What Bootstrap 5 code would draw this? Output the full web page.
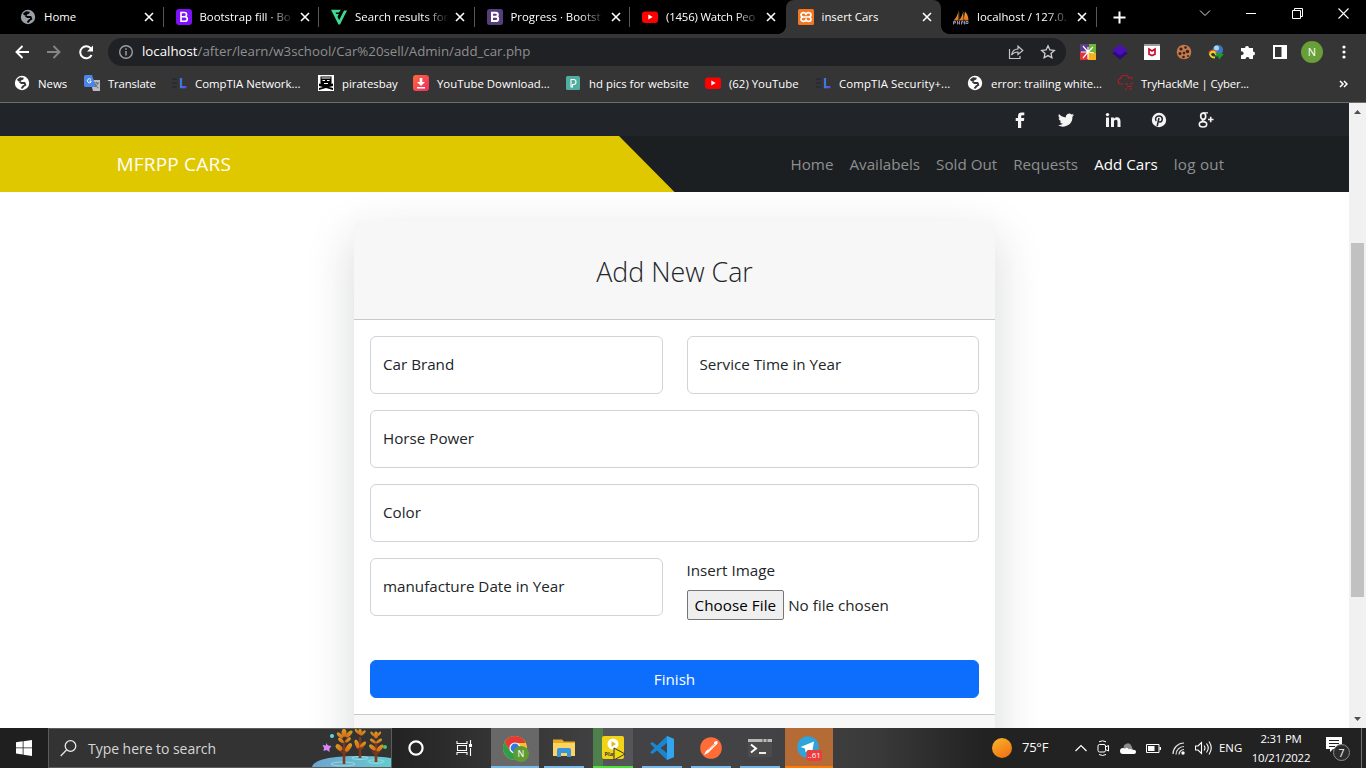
<!DOCTYPE html>
<html lang="en">
<head>
<meta charset="utf-8">
<title>insert Cars</title>
<link rel="stylesheet" href="https://cdn.jsdelivr.net/npm/bootstrap@5.3.0/dist/css/bootstrap.min.css">
<script src="https://cdn.jsdelivr.net/npm/bootstrap@5.3.0/dist/js/bootstrap.bundle.min.js"></script>
<style>
body{font-family:"Open Sans","Noto Sans",sans-serif;font-size:15.2px;width:1366px;height:768px;overflow:hidden}
svg{display:block;flex:none}
.tabstrip{height:34px;background:#000;color:#fff;font-size:11.4px;padding-left:8px}
.tab{width:155.5px;height:34px;padding-left:12px;flex:none;position:relative}
.tab-title{width:94px;margin-left:8px;white-space:nowrap;-webkit-mask-image:linear-gradient(90deg,#000 74%,transparent);mask-image:linear-gradient(90deg,#000 74%,transparent)}
.tab-title.whole{-webkit-mask-image:none;mask-image:none}
.tab .shut{margin-left:6px}
.tab.split{border-right:1px solid #55585b;height:20px}
.tab.current{background:#353535;border-radius:8px 8px 0 0}
.tab.current::before,.tab.current::after{content:"";position:absolute;bottom:0;width:8px;height:8px}
.tab.current::before{left:-8px;background:radial-gradient(circle at 0 0,#000 7.6px,#353535 8px)}
.tab.current::after{right:-8px;background:radial-gradient(circle at 100% 0,#000 7.6px,#353535 8px)}
.winbtn{width:46px}
.toolbar{height:36px;background:#353535;padding-left:6px}
.slot{width:32px;flex:none;display:flex;justify-content:center;align-items:center}
.omnibox{height:28px;width:958px;margin-left:6px;border-radius:14px;background:#202124;color:#9aa0a6;font-size:13.28px;flex:none;padding-left:10px}
.omnibox .url{margin-left:8px;color:#8f8f8f}
.avatar{width:22px;height:22px;border-radius:50%;background:#689f38;color:#fff;font-size:11px}
.marks{height:33px;background:#353535;color:#fff;border-bottom:1px solid #6d6d6d;font-size:11.4px;padding:0 18px 5px 14px;display:grid;grid-template-columns:70px 87px 147px 95px 152px 140px 110px 152px 150px 1fr auto;align-items:center;white-space:nowrap}
.marks>div{display:flex;align-items:center;gap:8px}
.tight{letter-spacing:-.18px}
.viewport{height:625px}
.page{width:1349px;overflow:hidden}
.scroller{width:17px;background:#f1f1f1;padding-top:7px}
.thumb{width:13px;height:354px;background:#c1c1c1;margin-top:129px}
.social{height:33px;background:#212529}
.social .inner{gap:30.5px;padding-right:19px}
.mainnav{height:56px;background:#1c1f21}
.yellow{position:absolute;inset:0 50% 0 0;background:#e0c800;clip-path:polygon(0 0,619px 0,100% 100%,0 100%)}
.navbar-brand{font-size:19px;margin-right:0;letter-spacing:.2px}
.mainnav .nav-link{font-size:15.2px;padding:8px;color:#8d8f90}
.mainnav .nav-link.active{color:#fff}
.addcard{width:641px;margin-top:29px;border:0;height:620px}
.addcard .card-header{height:99px;background:#f7f7f7;border-bottom:1px solid #c9c9c9;padding-top:13px}
.addcard .card-header h3{font-weight:300;font-size:26.8px}
.addcard .card-footer{background:#f7f7f7;border-top:1px solid #c9c9c9}
.addcard .form-control{border-color:#ced4da}
.form-floating>label{color:#212529}
.filebtn{height:30px;border:1px solid #767676;border-radius:2px;background:#efefef;color:#000;padding:0 7px;letter-spacing:.07px}
.btn{font-size:15.2px;height:38px}
.taskbar{height:40px;background:linear-gradient(90deg,#1f1f1f 0,#232323 29%,#343434 36%,#434244 45%,#434244 56%,#3a3a3b 64%,#222 72%,#222);color:#fff}
.searchbox{width:344px;height:40px;background:#333;border:1px solid #5c5c5c;color:#d6d6d6;font-size:14px}
.app{width:48px;height:40px;margin-right:1px;flex:none;position:relative;display:flex;justify-content:center;align-items:center}
.app::after{content:"";position:absolute;left:4px;right:4px;bottom:0;height:2px;background:#76b9ed}
.app.on{background:#686868}.app.on::after,.app.alert-app::after{left:0;right:0}
.app.play{background:linear-gradient(90deg,transparent 4px,#4f7f4b 4px,#4f7f4b 14px,#555557 14px,#555557 44px,transparent 44px)}
.app.play::after{background:#4be33a}
.app.alert-app{background:#b46b35}.app.alert-app::after{background:#ff7a00}
.sun{width:20px;height:20px;border-radius:50%;background:linear-gradient(150deg,#f8b62c,#f06a10)}
.clock{width:80px;font-size:11.4px;line-height:19px;text-align:center;margin-left:-3px;letter-spacing:-.2px}
</style>
</head>
<body class="d-flex flex-column m-0">
<svg width="0" height="0" class="position-absolute">
<defs>
<symbol id="x" viewBox="0 0 10 10"><path d="M1 1l8 8M9 1l-8 8" stroke="#fff" stroke-width="1.6"/></symbol>
<symbol id="globe" viewBox="0 0 16 16"><circle cx="8" cy="8" r="7.2" fill="currentColor"/><path d="M9.800 2.800Q10 5 7.500 5.200L6.300 6.500 4 6.200 3 4.500 6 2.300z" fill="var(--cut,#353535)"/><path d="M5.500 6.800l2 1.200h3l.8 2-2 1.300-1.800 2.200" fill="none" stroke="var(--cut,#353535)" stroke-width="1.900"/></symbol>
<symbol id="yt" viewBox="0 0 16 16"><rect y="2.500" width="16" height="11.500" rx="3" fill="#f00"/><path d="M6.300 5.500v5l4.400-2.500z" fill="#fff"/></symbol>
<symbol id="el" viewBox="0 0 16 16"><path d="M1 4h5M1 8h5M1 12h5" stroke="#2b2b36" stroke-width="1.800"/><path d="M10 3v9.200h5.500" fill="none" stroke="url(#elg)" stroke-width="2.200"/></symbol>
<linearGradient id="elg"><stop offset="0" stop-color="#3a7be0"/><stop offset="1" stop-color="#6a3fd0"/></linearGradient>
<linearGradient id="boat" x2="0" y2="1"><stop offset="0" stop-color="#f9b233"/><stop offset="1" stop-color="#e0701c"/></linearGradient>
</defs>
</svg>

<!-- tabs -->
<div class="tabstrip d-flex align-items-center">
  <div class="tab split d-flex align-items-center"><svg width="16" height="16" style="color:#9aa0a6;--cut:#000"><use href="#globe"/></svg><span class="tab-title whole">Home</span><svg class="shut" width="10" height="10"><use href="#x"/></svg></div>
  <div class="tab split d-flex align-items-center"><svg width="16" height="16"><rect width="16" height="16" rx="3" fill="#7d12f8"/><path d="M5 3.500h3.500a2 2 0 010 4.200H5h4a2.300 2.300 0 010 4.600H5z" fill="none" stroke="#fff" stroke-width="1.600"/></svg><span class="tab-title">Bootstrap fill · Bo</span><svg class="shut" width="10" height="10"><use href="#x"/></svg></div>
  <div class="tab split d-flex align-items-center"><svg width="16" height="16"><path d="M0 .8h9.800L8 3.600H4.500l.8 1.500h2.500L6.500 8l1.700 3L13 1.500h3L9 15.500H7.500z" fill="#3ddc91"/></svg><span class="tab-title">Search results for</span><svg class="shut" width="10" height="10"><use href="#x"/></svg></div>
  <div class="tab split d-flex align-items-center"><svg width="16" height="16"><rect width="16" height="16" rx="2.500" fill="#563d7c"/><path d="M5 3.800h3.800a1.800 1.800 0 010 4H5h4a2.100 2.100 0 010 4.300H5z" fill="none" stroke="#fff" stroke-width="2"/></svg><span class="tab-title">Progress · Bootst</span><svg class="shut" width="10" height="10"><use href="#x"/></svg></div>
  <div class="tab d-flex align-items-center"><svg width="16" height="16"><use href="#yt"/></svg><span class="tab-title tight">(1456) Watch Peo</span><svg class="shut" width="10" height="10"><use href="#x"/></svg></div>
  <div class="tab current d-flex align-items-center"><svg width="16" height="16"><rect width="16" height="16" rx="1.500" fill="#f37623"/><path d="M8 6.300V5.500C8 3 3 3 3 5.500 3 7 4 8 5.500 8h5C12 8 13 7 13 5.500 13 3 8 3 8 5.500M8 9.500v1c0 2.500-5 2.500-5 0C3 9 4 8 5.500 8h5c1.500 0 2.500 1 2.500 2.500 0 2.500-5 2.500-5 0" fill="none" stroke="#fff" stroke-width="1.700"/></svg><span class="tab-title whole">insert Cars</span><svg class="shut" width="10" height="10"><use href="#x"/></svg></div>
  <div class="tab split d-flex align-items-center"><svg width="16" height="16"><path d="M5.500 1Q5 7 .5 11.500h5zM8.500 0q3 6-3 11.500h6zM12 2.500q3.500 4 3.500 9h-5z" fill="url(#boat)"/><path d="M6 3.500v8M10.500 3v8.500" stroke="#5a4630" stroke-width=".8"/><path d="M.5 15.500v-3h2v1.500h-1.500M4.500 12v3.500M4.500 14h2M6.500 12v3.500M8.500 15.500v-3h1.500v2M11.500 12v3.500M13 15v-2.500h2v2h-2" fill="none" stroke="#8d8fb8" stroke-width="1"/></svg><span class="tab-title">localhost / 127.0.</span><svg class="shut" width="10" height="10"><use href="#x"/></svg></div>
  <svg class="ms-3" width="13" height="13"><path d="M6.500.5v12M.5 6.500h12" stroke="#fff" stroke-width="2"/></svg>
  <div class="d-flex align-items-center ms-auto mb-1 pb-1">
    <div class="winbtn"><svg class="mx-auto" width="12" height="8"><path d="M1 1.500l5 5 5-5" fill="none" stroke="#ddd"/></svg></div>
    <div class="winbtn"><svg class="mx-auto" width="10" height="10"><path d="M0 5.500h10" stroke="#fff"/></svg></div>
    <div class="winbtn"><svg class="mx-auto" width="11" height="11"><path d="M.5 2.500h8v8h-8zM2.500 2V.5h8v8H9" fill="none" stroke="#fff"/></svg></div>
    <div class="winbtn"><svg class="mx-auto" width="11" height="11"><path d="M.5.5l10 10M10.500.5l-10 10" stroke="#fff" stroke-width="1.100"/></svg></div>
  </div>
</div>

<!-- toolbar -->
<div class="toolbar d-flex align-items-center">
  <div class="slot"><svg width="14" height="14"><path d="M14 7H1.500M7.500 1l-6 6 6 6" fill="none" stroke="#fff" stroke-width="1.900"/></svg></div>
  <div class="slot"><svg width="14" height="14"><path d="M0 7h12.500M6.500 1l6 6-6 6" fill="none" stroke="#858585" stroke-width="1.900"/></svg></div>
  <div class="slot"><svg width="15" height="15"><path d="M12.600 10A6 6 0 1112 3.600" fill="none" stroke="#fff" stroke-width="2"/><path d="M14 .5v6H8z" fill="#fff"/></svg></div>
  <div class="omnibox d-flex align-items-center">
    <svg width="16" height="16" viewBox="0 0 16 16"><circle cx="8" cy="8" r="6.300" fill="none" stroke="#9aa0a6" stroke-width="1.400"/><path d="M8 4.200v1.600M8 7v4.600" stroke="#9aa0a6" stroke-width="1.500"/></svg>
    <span class="url"><span class="text-white">localhost</span>/after/learn/w3school/Car%20sell/Admin/add_car.php</span>
    <div class="d-flex ms-auto" style="padding-right:2px">
      <div class="slot"><svg width="16" height="16"><path d="M1.500 5v9.500h10.500V12M3.500 11c.8-4 3-6 6.500-6V2.200L14.800 6.500 10 10.500V8C7 8 5 9 3.500 11z" fill="none" stroke="#c4c4c4" stroke-width="1.200"/></svg></div>
      <div class="slot"><svg width="16" height="16"><path d="M8 1.800l1.900 4.100 4.400.5-3.300 3 .9 4.400L8 11.600l-3.900 2.200.9-4.400-3.300-3 4.400-.5z" fill="none" stroke="#d0d0d0" stroke-width="1.300"/></svg></div>
    </div>
  </div>
  <div class="d-flex" style="margin-left:6px">
    <div class="slot"><svg width="16" height="16"><path fill="#5b3b8c" d="M0 0h9v8H0z"/><path fill="#6fb536" d="M9 0h7v9H9z"/><path fill="#e03238" d="M0 8h8v8H0z"/><path fill="#f5b21b" d="M8 9h8v7H8z"/><path d="M8 8L3 2M8 8l5-5M8 8v7M8 8H1M8 8l6 1M8 8l-5 6M8 8V3" stroke="#fff" stroke-width="1.200"/></svg></div>
    <div class="slot"><svg width="16" height="16"><path d="M0 9l8-4 8 4-8 6.500z" fill="#2c0c7c"/><path d="M8 .5L15.500 6 8 11.500.5 6z" fill="#4a0fb8"/></svg></div>
    <div class="slot"><svg width="16" height="16"><path fill="#fff" d="M0 0h16v16H0z"/><path fill="#9a9a9a" d="M0 0h16v2H0z"/><path d="M5 5v5.200l3 1.300 3-1.300V5L8 7z" fill="none" stroke="#c8102e" stroke-width="1.700"/></svg></div>
    <div class="slot"><svg width="16" height="16"><circle cx="8" cy="8" r="7.300" fill="#c07a4e"/><g fill="#3d2118"><circle cx="5" cy="5" r="1.600"/><circle cx="9.500" cy="3.500" r="1.300"/><circle cx="11.500" cy="7.500" r="1.700"/><circle cx="4" cy="9.500" r="1.500"/><circle cx="8" cy="9" r="1.300"/><circle cx="7.500" cy="13" r="1.300"/><circle cx="12" cy="12" r="1"/></g></svg></div>
    <div class="slot"><svg width="16" height="16"><circle cx="9.800" cy="6" r="5.300" fill="#3f75c4"/><circle cx="8.500" cy="4" r="2.500" fill="#a9d7ec"/><path d="M9 10C8 5.500 2 5 1 9.500" fill="none" stroke="#e0512a" stroke-width="1.300"/><path d="M8.500 11C7 6.500 3 7 2 10.500q1 3 5 3" fill="none" stroke="#f5d22d" stroke-width="1.800"/><path d="M7 8.500l9 1.500-5 5.500-.8-3L6 12.500l2.500-2z" fill="#1f9a2c"/></svg></div>
    <div class="slot"><svg width="16" height="16"><path d="M1 4h4a2 2 0 114 0h4v3.500a2 2 0 110 4V15H9.500a1.900 1.900 0 10-4 0H1v-4a1.900 1.900 0 100-3.500z" fill="#fff"/></svg></div>
    <div class="slot"><svg width="14" height="14"><path d="M0 0h14v14H0z" fill="#fff"/><path d="M2 2h6.500v10H2z" fill="#353535"/></svg></div>
    <div class="slot"><div class="avatar d-flex align-items-center justify-content-center">N</div></div>
    <div class="slot"><svg width="4" height="14" fill="#fff"><circle cx="2" cy="2" r="1.600"/><circle cx="2" cy="7" r="1.600"/><circle cx="2" cy="12" r="1.600"/></svg></div>
  </div>
</div>

<!-- bookmarks -->
<div class="marks">
  <div><svg width="16" height="16" style="color:#fff"><use href="#globe"/></svg>News</div>
  <div class="tight"><svg width="16" height="16"><path d="M6 5h10v11H9z" fill="#b9bcc2"/><path d="M0 1.500A1.500 1.500 0 011.500 0H8l4 12H1.500A1.500 1.500 0 010 10.500z" fill="#4a86e8"/><path d="M7 4.500A2 2 0 107 7V6H5.500" fill="none" stroke="#fff"/><path d="M10 8h5M12.500 7v1m1.500 0q-1 3-3 4m0-3q1 3 3.500 4" fill="none" stroke="#666b75"/></svg>Translate</div>
  <div><svg width="16" height="16"><use href="#el"/></svg>CompTIA Network...</div>
  <div><svg width="16" height="16"><path d="M0 0h16v16H0z" fill="#fff"/><path d="M2.500 1.500h11V9l1.500-.5V11l-4 1 4 1v2l-7-2-7 2v-2l4-1-4-1V8.500L2.500 9z" fill="#000"/><path d="M4.500 5.500h2.500M9 5.500h2.500M6 8.500h4M3.500 3h9" stroke="#fff" stroke-width="1"/></svg>piratesbay</div>
  <div><svg width="16" height="16"><defs><linearGradient id="yd" x2="1" y2="1"><stop stop-color="#ff6a3c"/><stop offset="1" stop-color="#ef2b63"/></linearGradient></defs><rect width="16" height="16" rx="3" fill="url(#yd)"/><path d="M6.700 3h2.600v4H12L8 11 4 7h2.700zM4 12h8v1.500H4z" fill="#fff"/></svg>YouTube Download...</div>
  <div><svg width="16" height="16"><rect x="1" y="1" width="14" height="14" rx="1.500" fill="#4fae9f"/><path d="M6 12V4.500h2.500a2.300 2.300 0 010 5H7.500V12z" fill="none" stroke="#fff" stroke-width="1.100"/></svg>hd pics for website</div>
  <div><svg width="16" height="16"><use href="#yt"/></svg>(62) YouTube</div>
  <div style="letter-spacing:.12px"><svg width="16" height="16"><use href="#el"/></svg>CompTIA Security+...</div>
  <div><svg width="16" height="16" style="color:#fff"><use href="#globe"/></svg>error: trailing white...</div>
  <div class="tight"><svg width="16" height="16"><path d="M6 9H3.500a2.800 2.800 0 010-5.500A4.500 4.500 0 0112 3a3 3 0 013 5.500M8 9h3m1.500 0H15M10 11.500h5M8 14h2m2 0h3" fill="none" stroke="#b01e24" stroke-width="1.200"/></svg>TryHackMe | Cyber...</div>
  <svg width="9" height="8"><path d="M1 1l3 3-3 3M5 1l3 3-3 3" fill="none" stroke="#fff" stroke-width="1.500"/></svg>
</div>

<!-- web page -->
<div class="viewport d-flex">
  <div class="page">
    <div class="social"><div class="container h-100"><div class="inner d-flex justify-content-end align-items-center h-100">
      <svg width="16" height="16" fill="#f4f4f4"><path d="M6 16V9H3.700V6H6V4.200C6 1.600 7.400.5 9.500.5h2.800v2.700h-1.900C9.500 3.200 9.200 3.600 9.200 4.400V6h3.100l-.4 3H9.200v7z"/></svg>
      <svg width="16" height="16" fill="#f4f4f4"><path d="M16 3a6.600 6.600 0 01-1.900.5A3.300 3.300 0 0015.600 1.700a6.600 6.600 0 01-2.100.8 3.300 3.300 0 00-5.600 3A9.300 9.300 0 011.100 2.100a3.300 3.300 0 001 4.400A3.200 3.200 0 01.6 6.100a3.300 3.300 0 002.700 3.200 3.200 3.200 0 01-1.500.1 3.300 3.300 0 003.100 2.300A6.600 6.600 0 010 13a9.300 9.300 0 0014.400-8.300A6.700 6.700 0 0016 3z"/></svg>
      <svg width="16" height="16" fill="#f4f4f4"><path d="M1 5.500h3V15H1zM6 5.500h2.900v1.300C9.500 5.900 10.500 5.300 12 5.300c2.500 0 3.500 1.600 3.500 4.200V15h-3v-5c0-1.500-.4-2.200-1.600-2.200C9.600 7.800 9 8.600 9 10v5H6z"/><circle cx="2.500" cy="2.600" r="1.700"/></svg>
      <svg width="16" height="16"><circle cx="8" cy="8" r="7.200" fill="#f4f4f4"/><path d="M6.200 14L8 6M5.200 9C3.500 6.500 5 4 8 4c4.500 0 4 6 .9 6-1 0-1.500-.5-1.700-1" fill="none" stroke="#212529" stroke-width="1.500"/></svg>
      <svg width="16" height="16" fill="none" stroke="#f4f4f4"><ellipse cx="5.200" cy="4.300" rx="2.500" ry="3.100" stroke-width="1.700"/><path d="M5 .9h5M7 7.500c-3 0-3.500 1.300-1.500 2.100" stroke-width="1.400"/><ellipse cx="5" cy="12.300" rx="3.700" ry="2.700" stroke-width="1.600"/><path d="M12.700 4.800v5.400M10 7.500h5.500" stroke-width="1.600"/></svg>
    </div></div></div>
    <nav class="navbar navbar-expand navbar-dark mainnav p-0">
      <div class="yellow"></div>
      <div class="container position-relative">
        <a class="navbar-brand" href="#">MFRPP CARS</a>
        <div class="navbar-nav ms-auto">
          <a class="nav-link" href="#">Home</a><a class="nav-link" href="#">Availabels</a><a class="nav-link" href="#">Sold Out</a><a class="nav-link" href="#">Requests</a><a class="nav-link active" href="#">Add Cars</a><a class="nav-link" href="#" style="letter-spacing:.25px">log out</a>
        </div>
      </div>
    </nav>
    <div class="card addcard shadow-lg mx-auto">
      <div class="card-header d-flex align-items-center justify-content-center"><h3 class="m-0">Add New Car</h3></div>
      <form class="card-body flex-grow-0">
        <div class="row mb-3">
          <div class="col-6"><div class="form-floating"><input class="form-control" id="brand" placeholder=" "><label for="brand">Car Brand</label></div></div>
          <div class="col-6"><div class="form-floating"><input class="form-control" id="years" placeholder=" "><label for="years">Service Time in Year</label></div></div>
        </div>
        <div class="form-floating mb-3"><input class="form-control" id="hp" placeholder=" "><label for="hp">Horse Power</label></div>
        <div class="form-floating mb-3"><input class="form-control" id="color" placeholder=" "><label for="color">Color</label></div>
        <div class="row" style="height:102px">
          <div class="col-6"><div class="form-floating"><input class="form-control" id="made" placeholder=" "><label for="made">manufacture Date in Year</label></div></div>
          <div class="col-6"><label class="d-block mb-2" style="line-height:24px">Insert Image</label><div class="d-flex align-items-center"><button type="button" class="filebtn">Choose File</button><span class="ms-1">No file chosen</span></div></div>
        </div>
        <button type="button" class="btn btn-primary w-100 d-block">Finish</button>
      </form>
      <div class="card-footer flex-grow-1"></div>
    </div>
  </div>
  <div class="scroller d-flex flex-column align-items-center">
    <svg width="7" height="4"><path d="M0 4l3.500-4L7 4z" fill="#505050"/></svg>
    <div class="thumb"></div>
    <svg class="mt-auto" style="margin-bottom:7px" width="7" height="4"><path d="M0 0l3.500 4L7 0z" fill="#505050"/></svg>
  </div>
</div>

<!-- taskbar -->
<div class="taskbar d-flex align-items-center">
  <div class="d-flex justify-content-center" style="width:48px"><svg width="16" height="16" fill="#fff"><path d="M0 2.300l6.700-1v6.200H0zM7.500 1.200L16 0v7.500H7.500zM0 8.300h6.700v6.200L0 13.600zM7.500 8.300H16V16l-8.500-1.200z"/></svg></div>
  <div class="searchbox d-flex align-items-center">
    <svg style="margin-left:11px" width="17" height="17"><circle cx="10.500" cy="6" r="5.300" fill="none" stroke="#e8e8e8" stroke-width="1.300"/><path d="M6.500 10L.7 16" stroke="#e8e8e8" stroke-width="1.300"/></svg>
    <span style="margin-left:11px;letter-spacing:-.04px;padding-top:1px">Type here to search</span>
    <svg class="ms-auto" width="80" height="38" viewBox="0 0 80 38">
      <defs><linearGradient id="lake"><stop stop-color="#6fa3cf"/><stop offset="1" stop-color="#63cccf"/></linearGradient>
      <linearGradient id="leaf" x2="0" y2="1"><stop stop-color="#d6a01c"/><stop offset="1" stop-color="#d9661c"/></linearGradient></defs>
      <path d="M1 38c2-8 22-11 45-11 18 0 28 1 34 2v9z" fill="url(#lake)"/>
      <g fill="none" stroke="#a2e0ea" stroke-width=".8"><ellipse cx="32" cy="35" rx="12" ry="2"/><ellipse cx="49" cy="29" rx="8" ry="1.500"/><ellipse cx="65" cy="32.500" rx="8" ry="1.700"/></g>
      <g stroke="#7c3a1c" stroke-width="2.600" fill="none"><path d="M33 35V12M49 29V8M65 33V13"/><path d="M33 25l-5-4M33 25l5-4M49 21l-4-3M49 21l4-3M65 26l-4-4M65 26l4-4" stroke-width="1.500"/></g>
      <g fill="url(#leaf)"><ellipse cx="33" cy="4" rx="2.500" ry="4"/><ellipse cx="29" cy="6.500" rx="1.800" ry="4" transform="rotate(-45 29 6.500)"/><ellipse cx="38" cy="5" rx="2" ry="4.500" transform="rotate(45 38 5)"/><ellipse cx="30" cy="11.500" rx="1.600" ry="3.500" transform="rotate(-50 30 11.500)"/><ellipse cx="37" cy="11" rx="1.600" ry="3.500" transform="rotate(50 37 11)"/><ellipse cx="28" cy="18.500" rx="2.500" ry="4" transform="rotate(-45 28 18.500)"/><ellipse cx="37.500" cy="18.500" rx="2.300" ry="5" transform="rotate(35 37.500 18.500)"/>
      <ellipse cx="49" cy="3" rx="1.800" ry="3"/><ellipse cx="46" cy="2.500" rx="1.300" ry="3" transform="rotate(-40 46 2.500)"/><ellipse cx="52" cy="4" rx="1.400" ry="3.500" transform="rotate(45 52 4)"/><ellipse cx="46" cy="15" rx="2" ry="4.500" transform="rotate(-20 46 15)"/><ellipse cx="52" cy="15.500" rx="1.800" ry="3.800" transform="rotate(45 52 15.500)"/>
      <ellipse cx="65" cy="6" rx="2" ry="3.500"/><ellipse cx="61.500" cy="5" rx="1.300" ry="3" transform="rotate(-40 61.500 5)"/><ellipse cx="68" cy="5" rx="1.300" ry="3" transform="rotate(40 68 5)"/><ellipse cx="62" cy="12" rx="1.500" ry="3.500" transform="rotate(-55 62 12)"/><ellipse cx="68" cy="12" rx="1.500" ry="3.500" transform="rotate(55 68 12)"/><ellipse cx="61.500" cy="18.500" rx="2" ry="4" transform="rotate(-50 61.500 18.500)"/><ellipse cx="69" cy="19" rx="2" ry="4.500" transform="rotate(45 69 19)"/></g>
      <circle cx="21" cy="7" r="2" fill="#63d8ea"/><circle cx="74" cy="18" r="2" fill="#4cc36a"/><path d="M15 14l2 2.500 3.500.5-2 2.500 0 3.500-3-2-3 1 .5-3-1.500-3 3.500.5z" fill="#d886f5"/>
    </svg>
  </div>
  <div class="d-flex justify-content-center" style="width:48px"><svg width="16" height="16"><circle cx="8" cy="8" r="6.600" fill="none" stroke="#fff" stroke-width="2.200"/></svg></div>
  <div class="d-flex justify-content-center" style="width:47px;padding-left:2px"><svg width="17" height="16"><path d="M1 1v2.500h10V1M1 15v-2.500h10V15M1.500 5.500h9v5h-9zM14.500 0v4M14.500 8v8" fill="none" stroke="#fff" stroke-width="1.100"/><path d="M13 4h3v3h-3z" fill="#fff"/></svg></div>
  <div class="d-flex" style="margin-left:4px">
    <div class="app on"><svg width="28" height="28" viewBox="0 0 28 28"><circle cx="14" cy="14" r="12" fill="#fbc02d"/><path d="M14 2a12 12 0 00-10.400 6L9 17l5-8h10.800A12 12 0 0014 2z" fill="#e53935"/><path d="M3.600 8A12 12 0 0014 26l5-9H9z" fill="#2e9e4b"/><circle cx="14" cy="14" r="5.600" fill="#fff"/><circle cx="14" cy="14" r="4.400" fill="#3578e5"/><circle cx="20" cy="20" r="8" fill="#5f9b35"/><text x="20" y="23.300" font-size="9" text-anchor="middle" fill="#fff">N</text></svg></div>
    <div class="app"><svg width="22" height="20"><path d="M0 1.500h9l2 2h11V18H0z" fill="#e9a820"/><path d="M0 5h22v13H0z" fill="#fcd462"/><path d="M4 12a2 2 0 012-2h10a2 2 0 012 2v7h-4v-4H8v4H4z" fill="#3a94dd"/></svg></div>
    <div class="app play"><svg width="26" height="26" viewBox="0 0 26 26"><rect x="2" y="1" width="22" height="23" rx="2" fill="#f3d316"/><circle cx="13" cy="9" r="5.500" fill="#fff"/><path d="M11.500 6.300v5.400L16 9z" fill="#e6b90b"/><text x="4.500" y="21" font-size="5.500" font-weight="700" fill="#333">Play</text><path d="M14 13v12l11-6z" fill="#f1d90e" stroke="#333"/></svg></div>
    <div class="app"><svg width="24" height="24"><path d="M17 0l7 3v18l-7 3L7 14.500 2.500 18 0 16.500 4.500 12 0 7.500 2.500 6 7 9.500zM17 7l-6.500 5 6.500 5z" fill="#1c85cf" fill-rule="evenodd"/><path d="M17 0l7 3v18l-7 3z" fill="#31a5f0"/></svg></div>
    <div class="app"><svg width="22" height="22"><circle cx="11" cy="11" r="10.800" fill="#ff6c37"/><path d="M17 4a2.500 2.500 0 00-3 3L6 14l-2 4 4-2 8-8a2.500 2.500 0 001-4z" fill="#fff"/><path d="M8 13l7-6" stroke="#ff9a75"/></svg></div>
    <div class="app"><svg width="24" height="18"><path d="M0 0h24v18H0z" fill="#4b4b4b"/><path d="M0 0h24v3H0z" fill="#b9b9b9"/><path d="M15 0v3M19 0v3" stroke="#555"/><path d="M3 5.500l5 4-5 4" fill="none" stroke="#fff" stroke-width="2"/><path d="M11 14h7" stroke="#fff" stroke-width="1.800"/></svg></div>
    <div class="app alert-app"><svg width="26" height="26" viewBox="0 0 26 26"><circle cx="12" cy="12" r="10.800" fill="#2ea3dc"/><path d="M4.500 12L18 6.500 16 18l-4-3-2.500 2.500L9 13.500z" fill="#fff"/><rect x="10.500" y="15" width="15.500" height="11" rx="2.500" fill="#ee3b3b"/><text x="18.200" y="23.300" font-size="8" text-anchor="middle" fill="#fff">..61</text></svg></div>
  </div>
  <div class="d-flex align-items-center ms-auto" style="font-size:13px">
    <div class="sun"></div><span style="margin-left:10px;width:48px;letter-spacing:-.25px">75°F</span>
    <div class="d-flex justify-content-between align-items-center" style="width:137px;margin-left:5px">
      <svg width="12" height="8"><path d="M.5 7L6 1.500 11.500 7" fill="none" stroke="#fff" stroke-width="1.200"/></svg>
      <svg width="12" height="16"><rect x="1" y="4.500" width="7.500" height="7.500" rx="1.500" fill="none" stroke="#fff"/><path d="M8.500 7l3-1.500v5.500l-3-1.500M2 1.800q3.500-2 7 0M2 14.500q3.500 2 7 0" fill="none" stroke="#fff"/></svg>
      <svg width="16" height="11"><path d="M4 6a4 4 0 017.500-3L13 7H4z" fill="#8b8b8b"/><path d="M3 11a3 3 0 010-6q1 0 2 .7Q7 3.500 9 6.500q1-1.500 3 .3 4-.5 4 2.200 0 2-2 2z" fill="#fff"/></svg>
      <svg width="15" height="9"><path d="M.5.500h12.500v8H.5z" fill="none" stroke="#fff"/><path d="M2 2h6.500v5H2zM13.500 3H15v3h-1.500z" fill="#fff"/></svg>
      <svg width="13" height="13"><g fill="none" stroke="#e0e0e0" stroke-width="1.200"><path d="M1 12A11 11 0 0112 1M4 12.500a8 8 0 018-8M7 12.500a5 5 0 015-5"/></g><circle cx="11" cy="11" r="1.700" fill="#fff"/></svg>
      <svg width="17" height="14"><path d="M.5 5h2.500l3.500-3.500v11L3 9H.5zM9 4.500q2 2.500 0 5M11.500 2.500q3.500 4.500 0 9M14 .5q4.500 6.500 0 13" fill="none" stroke="#fff" stroke-width="1.100"/></svg>
    </div>
    <span style="margin-left:7px;font-size:11.4px;width:25px">ENG</span>
    <div class="clock">2:31 PM<br>10/21/2022</div>
    <svg class="ms-1" width="26" height="26"><path d="M1 2h16v12H8l-3 3v-3H1z" fill="#fff"/><path d="M4 5.500h10M4 8.500h10M4 11.500h6" stroke="#222"/><circle cx="16.500" cy="17.500" r="8" fill="#2d2d2d" stroke="#8d8d8d"/><text x="16.500" y="21.500" font-size="10.500" text-anchor="middle" fill="#fff">7</text></svg>
    <div style="width:1px;height:40px;background:#707070;margin:0 4px 0 10px"></div>
  </div>
</div>
</body>
</html>
